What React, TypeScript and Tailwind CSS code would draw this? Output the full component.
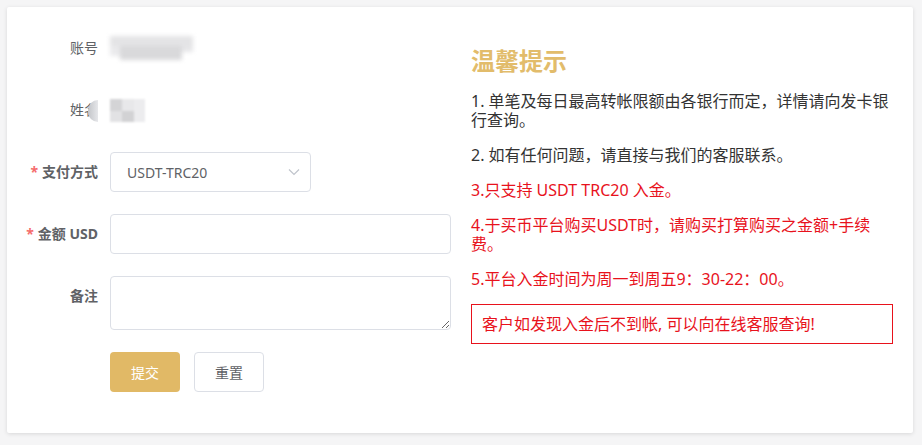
import React from "react";

const font = { fontFamily: '"Noto Sans", "Noto Sans CJK SC", sans-serif' };

const Label: React.FC<{ text: string; required?: boolean; bold?: boolean }> = ({
  text,
  required,
  bold,
}) => (
  <label
    className={`w-[103px] shrink-0 pr-[12px] text-right text-[14px] leading-[40px] text-[#606266] ${
      bold ? "font-bold" : "font-normal"
    }`}
  >
    {required && <span className="mr-[4px] text-[#f56c6c]">*</span>}
    {text}
  </label>
);

const App: React.FC = () => {
  return (
    <div className="min-h-[445px] w-[922px] bg-[#f5f5f6] pl-[7px] pt-[7px]" style={font}>
      <div className="flex h-[426px] w-[906px] rounded-[2px] bg-white shadow-[0_1px_4px_rgba(0,0,0,0.12)]">
        {/* form */}
        <div className="w-[444px] shrink-0 pt-[21px]">
          <div className="mb-[22px] flex h-[40px] items-center">
            <Label text="账号" />
            <div className="relative h-[24px] w-[83px] overflow-hidden blur-[2px]">
              <div className="h-[10px] w-full bg-[#e4e4e6]" />
              <div className="ml-[10px] h-[14px] w-[62px] bg-[#d9d9db]" />
              <div className="absolute left-0 top-[10px] h-[10px] w-[10px] bg-[#eaeaec]" />
              <div className="absolute right-0 top-[10px] h-[6px] w-[11px] bg-[#e6e6e8]" />
            </div>
          </div>

          <div className="relative mb-[22px] flex h-[40px] items-center">
            <Label text="姓名" />
            <div className="relative h-[23px] w-[35px] blur-[1px]">
              <div className="absolute left-0 top-0 h-[12px] w-[12px] bg-[#d4d4d6]" />
              <div className="absolute left-[12px] top-0 h-[12px] w-[12px] bg-[#e8e8ea]" />
              <div className="absolute left-[24px] top-0 h-[23px] w-[11px] bg-[#ececee]" />
              <div className="absolute left-0 top-[12px] h-[11px] w-[12px] bg-[#e2e2e4]" />
              <div className="absolute left-[12px] top-[12px] h-[11px] w-[12px] bg-[#d2d2d4]" />
            </div>
            <div className="absolute left-[81px] top-[10px] h-[22px] w-[10px] rounded-l-full bg-gradient-to-r from-[#c3c5c9] to-[#e6e7ea]" />
          </div>

          <div className="mb-[22px] flex h-[40px] items-center">
            <Label text="支付方式" required bold />
            <div className="flex h-[40px] w-[201px] items-center justify-between rounded-[4px] border border-[#dcdfe6] pl-[16px] pr-[10px] text-[14px] text-[#606266]">
              <span>USDT-TRC20</span>
              <svg width="12" height="8" viewBox="0 0 12 8" fill="none">
                <path d="M1 1.5l5 5 5-5" stroke="#c0c4cc" strokeWidth="1.2" />
              </svg>
            </div>
          </div>

          <div className="mb-[22px] flex h-[40px] items-center">
            <Label text="金额 USD" required bold />
            <input className="h-[40px] w-[341px] rounded-[4px] border border-[#dcdfe6] px-[15px] text-[14px] outline-none" />
          </div>

          <div className="mb-[22px] flex items-start">
            <Label text="备注" bold />
            <textarea className="h-[54px] w-[341px] rounded-[4px] border border-[#dcdfe6] px-[15px] py-[5px] text-[14px] outline-none" />
          </div>

          <div className="flex pl-[103px]">
            <button className="h-[40px] w-[70px] rounded-[4px] bg-[#e1b966] text-[14px] text-white">
              提交
            </button>
            <button className="ml-[14px] h-[40px] w-[70px] rounded-[4px] border border-[#dcdfe6] bg-white text-[14px] text-[#606266]">
              重置
            </button>
          </div>
        </div>

        {/* tips */}
        <div className="ml-[20px] w-[422px] shrink-0 pt-[38px]">
          <h2 className="mb-[15px] text-[24px] font-bold leading-[32px] text-[#e2bc6b]">
            温馨提示
          </h2>
          <div className="text-[16px] leading-[19px]">
            <p className="mb-[16px] text-[#333333]">
              1. 单笔及每日最高转帐限额由各银行而定，详情请向发卡银行查询。
            </p>
            <p className="mb-[16px] text-[#333333]">
              2. 如有任何问题，请直接与我们的客服联系。
            </p>
            <p className="mb-[16px] text-[#e8121c]">3.只支持 USDT TRC20 入金。</p>
            <p className="mb-[16px] text-[#e8121c]">
              4.于买币平台购买USDT时，请购买打算购买之金额+手续费。
            </p>
            <p className="mb-[15px] text-[#e8121c]">5.平台入金时间为周一到周五9：30-22：00。</p>
            <div className="h-[40px] border border-[#e8121c] pl-[10px] leading-[38px] text-[#e8121c]">
              客户如发现入金后不到帐, 可以向在线客服查询!
            </div>
          </div>
        </div>
      </div>
    </div>
  );
};

export default App;
